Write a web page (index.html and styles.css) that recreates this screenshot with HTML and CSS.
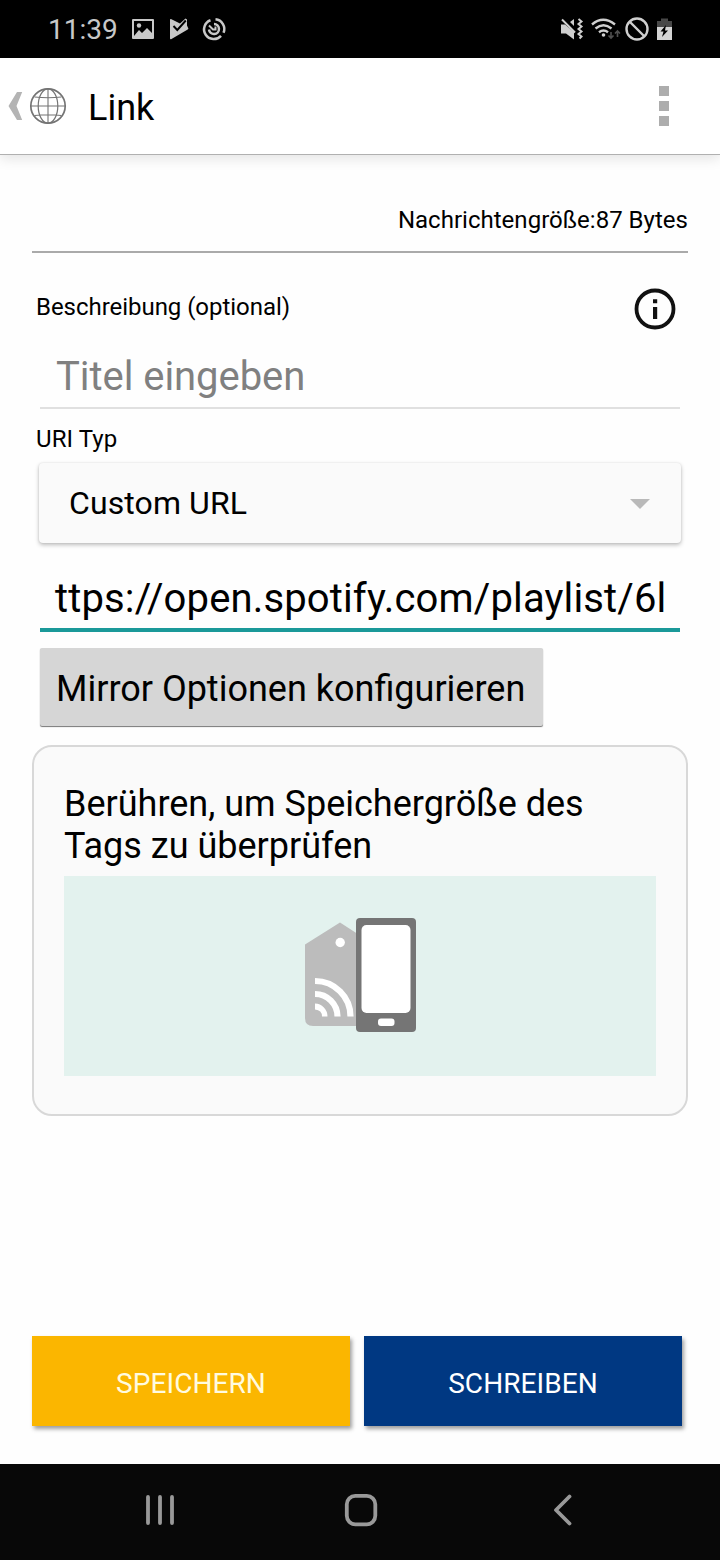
FILE: index.html
```html
<!DOCTYPE html>
<html lang="de">
<head>
<meta charset="utf-8">
<title>Link</title>
<link rel="stylesheet" href="styles.css">
</head>
<body>
<div class="screen">
  <div class="status">
    <span class="time">11:39</span>
    <svg class="status-left" width="98" height="28" viewBox="130 15 98 28">
      <path fill="#c8c8c8" fill-rule="evenodd" d="M133 19h20a1 1 0 0 1 1 1v18a1 1 0 0 1-1 1h-20a1 1 0 0 1-1-1V20a1 1 0 0 1 1-1zm1 2v15l5-6 3 3 5-5 5 5V21z"/>
      <circle cx="139" cy="25.500" r="2.200" fill="#c8c8c8"/>
      <path fill="#c8c8c8" d="M170 20q0-1.500 1.500-.8l8.500 4.300 5.500-5 1.500 1v6l1 2.200q1 1-.3 1.700L171.500 39q-1.500.8-1.500-.8z"/>
      <path fill="none" stroke="#000" stroke-width="1.900" d="M173.500 26l3.800 4 8.500-9.500"/>
      <g fill="none" stroke="#c8c8c8" stroke-width="2.500">
        <path d="M210.500 20.200a9.700 9.700 0 1 0 10.500 15.600"/>
        <path d="M215.500 19.300a9.700 9.700 0 0 1 8 13.500"/>
        <path d="M209 29.500a5 5 0 1 0 5-5.500"/>
        <path d="M209 25.500l4 4h2.500v-3" stroke-width="2"/>
      </g>
    </svg>
    <svg class="status-right" width="118" height="28" viewBox="558 15 118 28">
      <path fill="#cfcfcf" d="M561 24.500h4l9 7.500v7.500l-8-6h-5zM574 19v7l-4-4z"/>
      <path d="M562 19.500l13 13" stroke="#cfcfcf" stroke-width="2"/>
      <path d="M578.500 19l3 2.500-3 2.500 3 2.500-3 2.500 3 2.500-3 2.500 3 2.500-2 2" fill="none" stroke="#cfcfcf" stroke-width="2"/>
      <g fill="none" stroke="#cfcfcf" stroke-width="2.400">
        <path d="M592 24.500q11-9.500 23 0"/>
        <path d="M595.500 28.500q8-6.500 16 0"/>
        <path d="M599 32.300q4.500-3.500 9 0"/>
      </g>
      <circle cx="603.500" cy="35" r="1.800" fill="#cfcfcf"/>
      <path d="M611 32v6m-2.500-2.500L611 38l2.500-2.500M617.500 37v-6m-2.500 2.500l2.500-2.500 2.500 2.500" fill="none" stroke="#505050" stroke-width="1.600"/>
      <circle cx="637" cy="29" r="10.500" fill="none" stroke="#cfcfcf" stroke-width="2.400"/>
      <path d="M629.500 21.500l15 15" stroke="#cfcfcf" stroke-width="2.400"/>
      <path fill="#484848" d="M657 21h4v-2.500h7V21h4v6h-15z"/>
      <path fill="#d4d4d4" d="M657 27h15v13h-15z"/>
      <path fill="#000" d="M666 25l-5.500 6.500h3L662 37l6-6.500h-3z"/>
    </svg>
  </div>

  <header class="appbar">
    <svg class="globe" width="62" height="40" viewBox="6 86 62 40">
      <path fill="#b4b4b4" d="M17 92h5.200l-5.700 14 5.700 14H17l-8.500-14z"/>
      <g fill="none" stroke="#747474">
        <circle cx="48" cy="106" r="17.200" stroke-width="1.700"/>
        <ellipse cx="48" cy="106" rx="9.800" ry="17.200" stroke-width="1.200"/>
        <path d="M48 89v34M31 106h34M34.500 97q13.500 1.500 27 0M34.500 115.500q13.500-1.500 27 0" stroke-width="1.100"/>
      </g>
    </svg>
    <h1 class="title">Link</h1>
    <div class="overflow"><i></i><i></i><i></i></div>
  </header>

  <main class="content">
    <div class="size">Nachrichtengröße:87 Bytes</div>
    <div class="label-row">
      <label class="label">Beschreibung (optional)</label>
      <svg width="42" height="42" viewBox="0 0 42 42">
        <circle cx="21" cy="21" r="18.500" fill="none" stroke="#111" stroke-width="3.800"/>
        <path fill="#111" d="M19 11.200h4.200v4H19zM19 19h4.200v12H19z"/>
      </svg>
    </div>
    <div class="field">Titel eingeben</div>
    <label class="label uri-label">URI Typ</label>
    <div class="select">
      <span>Custom URL</span>
      <svg class="caret" width="20" height="10" viewBox="0 0 20 10"><path fill="#b9b9b9" d="M0 0h20L10 10z"/></svg>
    </div>
    <div class="url"><div class="url-text">ttps://open.spotify.com/playlist/6l</div></div>
    <div class="mirror">Mirror Optionen konfigurieren</div>
    <section class="card">
      <p class="card-text">Berühren, um Speichergröße des<br>Tags zu überprüfen</p>
      <div class="tag-area">
        <svg width="114" height="116" viewBox="304 917 114 116">
          <path fill="#bcbcbc" d="M305 944.500L340 922.500l17 11V1026h-44q-8 0-8-8z"/>
          <circle cx="340.200" cy="942.500" r="4.700" fill="#fff"/>
          <g fill="none" stroke="#fff" stroke-width="6.200">
            <path d="M315 981a35.500 35.500 0 0 1 35.500 35.500"/>
            <path d="M315 994a22.500 22.500 0 0 1 22.500 22.500"/>
          </g>
          <path fill="#fff" d="M315 1003.500a13 13 0 0 1 12.500 13H322q0-6.500-7-7z"/>
          <rect x="356" y="918" width="60" height="114" rx="4" fill="#757575"/>
          <rect x="361.500" y="925" width="49" height="88" rx="5" fill="#fff"/>
          <rect x="378" y="1018.500" width="16.500" height="7.500" rx="3" fill="#fff"/>
        </svg>
      </div>
    </section>
    <div class="actions">
      <div class="button save">SPEICHERN</div>
      <div class="button write">SCHREIBEN</div>
    </div>
  </main>

  <nav class="navbar">
    <svg width="430" height="34" viewBox="145 1493 430 34" fill="none" stroke="#999" stroke-width="3.800" stroke-linecap="round" stroke-linejoin="round">
      <path d="M148 1497v26M160 1497v26M172 1497v26"/>
      <rect x="346.800" y="1495.800" width="28.500" height="28.500" rx="8.500"/>
      <path d="M569.500 1496.500L556 1510l13.500 13.500"/>
    </svg>
  </nav>
</div>
</body>
</html>
```
FILE: styles.css
```css
* { box-sizing: border-box; }
body { margin: 0; background: #fefefe; color: #000; font-family: Roboto, "Liberation Sans", sans-serif; }
.screen { width: 720px; height: 1560px; display: flex; flex-direction: column; overflow: hidden; }

.status { height: 58px; flex: none; display: flex; align-items: center; background: #000; padding: 0 44px 0 48px; }
.time { width: 82px; padding-top: 2px; font-size: 28px; line-height: 34px; color: #c8c8c8; white-space: nowrap; }
.status-right { margin-left: auto; }

.appbar { height: 97px; flex: none; display: flex; align-items: center; padding: 0 51px 1px 6px; background: #fff; border-bottom: 1px solid #b0b0b0; box-shadow: 0 4px 12px rgba(0, 0, 0, .1); }
.title { margin: 0 0 0 20px; padding-top: 5px; font-size: 36px; font-weight: 400; line-height: 42px; }
.overflow { margin-left: auto; display: grid; gap: 5px; }
.overflow i { width: 10px; height: 10px; background: #adadad; }

.content { flex: 1; display: flex; flex-direction: column; padding: 0 32px; }
.size { height: 98px; padding-top: 51px; border-bottom: 2px solid #aaa; text-align: right; font-size: 24px; line-height: 28px; letter-spacing: .02px; }
.label-row { height: 92px; display: flex; align-items: flex-start; justify-content: space-between; padding: 35px 12px 0 4px; }
.label { display: block; font-size: 24px; line-height: 28px; }
.label-row .label { padding-top: 5px; letter-spacing: -.04px; }
.field { height: 64px; margin: 0 8px; padding: 8px 16px 0; border-bottom: 2px solid #e0e0e0; color: #808080; font-size: 40px; line-height: 48px; letter-spacing: -.05px; }
.uri-label { height: 54px; padding: 16px 4px 0; letter-spacing: .1px; }
.select { height: 80px; margin: 0 7px; padding: 0 31px 0 30px; display: flex; align-items: center; justify-content: space-between; background: #fafafa; border-radius: 4px; box-shadow: 0 2px 4px rgba(0, 0, 0, .26), 0 0 2px rgba(0, 0, 0, .1); font-size: 32px; line-height: 38px; letter-spacing: .1px; }
.caret { margin-top: 2px; }
.url { height: 89px; margin: 0 8px; padding: 32px 15px 0; border-bottom: 4px solid #1a9999; }
.url-text { height: 50px; font-size: 40px; line-height: 48px; letter-spacing: .14px; white-space: nowrap; }
.mirror { align-self: flex-start; width: 503px; height: 78px; margin: 16px 0 0 8px; padding: 20px 16px 16px; background: #d6d6d6; border-radius: 2px; box-shadow: 0 1px 1px #777; font-size: 36px; line-height: 42px; white-space: nowrap; }
.card { height: 371px; margin-top: 19px; padding: 36px 30px 0; background: #fafafa; border: 2px solid #d8d8d8; border-radius: 20px; }
.card-text { margin: 0; height: 93px; font-size: 36px; line-height: 42px; white-space: nowrap; }
.tag-area { height: 200px; background: #e3f2ee; display: flex; justify-content: center; padding: 41px 0 0 2px; }
.actions { display: flex; gap: 14px; margin-top: 220px; padding-right: 6px; }
.button { flex: 1; height: 90px; display: flex; align-items: center; justify-content: center; padding-top: 6px; font-size: 28px; line-height: 32px; letter-spacing: .08px; box-shadow: 2px 3px 4px rgba(0, 0, 0, .38); }
.save { background: #fbb600; color: #fffbe0; }
.write { background: #003882; color: #fff; }

.navbar { height: 96px; flex: none; background: #080808; padding: 29px 0 0 145px; }
```
